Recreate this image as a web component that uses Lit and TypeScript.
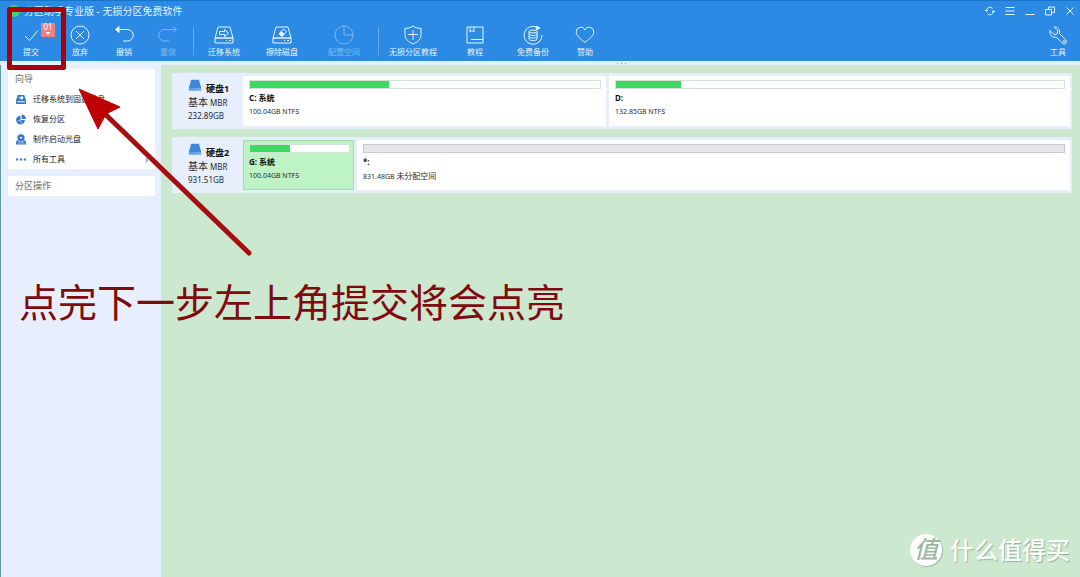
import { LitElement, html, css, svg, nothing } from "lit";
import { customElement, property } from "lit/decorators.js";
import { classMap } from "lit/directives/class-map.js";
import { styleMap } from "lit/directives/style-map.js";

const glyphs: Record<string, unknown> = {
  check: svg`<path d="M4 11l4.500 4.500L17 5.500"/>`,
  discard: svg`<circle cx="10" cy="10" r="9"/><path d="M6 6l8 8M14 6l-8 8"/>`,
  undo: svg`<path d="M1.500 4.500h12a5 5 0 0 1 0 11.500H9"/><path d="M5 1.500l-3.500 3L5 7.500z" fill="currentColor"/>`,
  redo: svg`<path d="M18.500 4.500h-12a5 5 0 0 0 0 11.500H11"/><path d="M15 1.500l3.500 3L15 7.500"/>`,
  migrate: svg`<path d="M4 2h12l3 11H1zM1 13h18v5H1zM12 15.500h1m2 0h2"/><path d="M5.500 6.500h5V4.500l4 3.500-4 3.500v-2h-5z"/>`,
  wipe: svg`<path d="M4 2h12l3 11H1zM1 13h18v5H1zM12 15.500h1m2 0h2"/><path d="M11.500 4l3 2.500-4.500 5-3-2.500z"/><path d="M9 6.500l3 2.500-2 2.500-3-2.500z" fill="currentColor"/>`,
  space: svg`<circle cx="10" cy="10" r="9"/><path d="M10 1v9h9"/>`,
  shield: svg`<path d="M10 1c2.500 1.800 5 2.300 8 2.500v6c0 5-3.500 7.500-8 9.500-4.500-2-8-4.500-8-9.500v-6c3-.2 5.500-.7 8-2.500zM10 5v10M5 9.500h10"/>`,
  book: svg`<path d="M2 2h16v16H2zM5 2v5l2-1.500L9 7V2M6 14.500h12"/>`,
  backup: svg`<path d="M14.500 2.500A9 9 0 1 0 19 10"/><path d="M13 1l4 2-3.500 2z" fill="currentColor"/><ellipse cx="10" cy="6.500" rx="4" ry="1.500"/><path d="M6 6.500V14c0 2 8 2 8 0V6.500M6 9c0 2 8 2 8 0M6 11.500c0 2 8 2 8 0"/>`,
  heart: svg`<path d="M10 17.500C5 13.500 1.200 10.500 1.200 7A4.600 4.600 0 0 1 10 5a4.600 4.600 0 0 1 8.800 2c0 3.500-3.800 6.500-8.800 10.500z"/>`,
  wrench: svg`<path d="M6 2l4 4-1 3-3 .5-4-4c-.8 4 2 7.500 6 6.500l6.500 6.200a2.300 2.300 0 0 0 3.300-3.300L11.500 8.500C12.500 4.500 9.500 1.500 6 2z"/><circle cx="16" cy="16.500" r=".8"/>`,
  refresh: svg`<path d="M3 10a7 7 0 0 1 12-5.500M17 10a7 7 0 0 1-12 5.500M0 8l3 3 3-3M20 12l-3-3-3 3" stroke-width="2"/>`,
  menu: svg`<path d="M1 3h18M1 10h18M1 17h18" stroke-width="2"/>`,
  minimize: svg`<path d="M1 17h18" stroke-width="2"/>`,
  restore: svg`<path d="M1 7h12v11H1zM7 7V2h12v11h-6" stroke-width="2"/>`,
  close: svg`<path d="M3 3l14 14M17 3L3 17" stroke-width="2"/>`,
  sideDisk: svg`<path d="M4 2h12l3 10v6H1v-6z" fill="currentColor" stroke="none"/><path d="M6 7h7M10.500 4L13.500 7l-3 3M3 14h14" stroke="#fff" stroke-width="2"/>`,
  sidePie: svg`<path d="M9 3a8 8 0 1 0 8 8H9z" fill="currentColor" stroke="none"/><path d="M11 1v8h8a8 8 0 0 0-8-8z" fill="currentColor" stroke="none"/><path d="M9 11l-7 3M9 11l2 8" stroke="#fff"/>`,
  sideDisc: svg`<circle cx="10" cy="7" r="6.500" fill="currentColor" stroke="none"/><circle cx="10" cy="7" r="2" fill="#fff" stroke="none"/><path d="M3 11l-2 4v4h18v-4l-2-4-4 3H7z" fill="currentColor" stroke="none"/><path d="M4 16.500h12" stroke="#fff"/>`,
  sideDots: svg`<path d="M1 8h4v4H1zM8 8h4v4H8zM15 8h4v4h-4z" fill="currentColor" stroke="none"/>`,
  disk: svg`<path d="M4 1h12l3.500 13H.5z" fill="#4185dc" stroke="none"/><path d="M.5 14h19v4H.5z" fill="#5b9be9" stroke="none"/><path d="M12 16h1m2 0h1m1 0h1" stroke="#e8f2ff"/>`,
};

@customElement("ui-icon")
class UiIcon extends LitElement {
  @property() name = "";
  static styles = css`
    :host { display: block; width: 20px; height: 20px; }
    .glyph { display: block; width: 100%; height: 100%; fill: none; stroke: currentColor; }
  `;
  render() {
    return html`<svg class="glyph" viewBox="0 0 20 20" aria-hidden="true">${glyphs[this.name]}</svg>`;
  }
}

interface Partition {
  name: string;
  size: string;
  note?: string;
  share: number;
  used: number;
  selected?: boolean;
  free?: boolean;
}

@customElement("disk-row")
class DiskRow extends LitElement {
  @property() name = "";
  @property() capacity = "";
  @property({ attribute: false }) partitions: Partition[] = [];
  static styles = css`
    :host { display: block; }
    .row { display: flex; gap: 3px; min-height: 50px; padding: 3px 2px 3px 0; background: #e6effb; }
    .disk { width: 52px; flex: none; padding: 3px 0 0 16px; color: #252a33; font-size: 8px; line-height: 13px; }
    .head { display: flex; align-items: flex-end; gap: 4px; height: 15px; margin-bottom: 2px; }
    .head ui-icon { width: 14px; height: 13px; align-self: flex-start; }
    .title { font-size: 9px; font-weight: 700; line-height: 11px; color: #111; }
    .kind { font-size: 10px; }
    .parts { flex: 1; min-width: 0; display: grid; gap: 3px; }
    .part { box-sizing: border-box; min-width: 0; padding: 3px 4px 0 6px; background: #fff; border: 1px solid #fff; border-left-width: 0; color: #2b2b2b; }
    .selected { background: #bef3c5; border: 1px solid #a5ddb0; padding-left: 5px; padding-right: 3px; }
    .bar { box-sizing: border-box; height: 9px; background: #fff; border: 1px solid #d5e0d8; }
    .free .bar { background: #e6e6ea; border-color: #c9c9cf; }
    .fill { height: 100%; background: #3fd862; }
    .name { padding-top: 3px; font-size: 8px; font-weight: 700; line-height: 12px; color: #111; }
    .size { padding-top: 2px; font-size: 7px; line-height: 12px; white-space: nowrap; }
    .note { font-size: 8px; }
  `;
  render() {
    const columns = this.partitions.map((p) => `minmax(0, ${p.share}fr)`).join(" ");
    return html`<div class="row">
      <div class="disk">
        <div class="head"><ui-icon name="disk"></ui-icon><span class="title">${this.name}</span></div>
        <div><span class="kind">基本</span> MBR</div>
        <div>${this.capacity}</div>
      </div>
      <div class="parts" style=${styleMap({ gridTemplateColumns: columns })}>
        ${this.partitions.map((p) => html`
          <div class=${classMap({ part: true, selected: !!p.selected, free: !!p.free })}>
            <div class="bar">${p.used ? html`<div class="fill" style=${styleMap({ width: `${p.used}%` })}></div>` : nothing}</div>
            <div class="name">${p.name}</div>
            <div class="size">${p.size}${p.note ? html` <span class="note">${p.note}</span>` : nothing}</div>
          </div>`)}
      </div>
    </div>`;
  }
}

const tools = [
  [
    { icon: "check", label: "提交", size: "wide", count: "01" },
    { icon: "discard", label: "放弃", size: "small" },
    { icon: "undo", label: "撤销", size: "small" },
    { icon: "redo", label: "重做", size: "small", off: true },
  ],
  [
    { icon: "migrate", label: "迁移系统", size: "wide" },
    { icon: "wipe", label: "擦除磁盘", size: "large" },
    { icon: "space", label: "配置空间", size: "large", off: true },
  ],
  [
    { icon: "shield", label: "无损分区教程", size: "large" },
    { icon: "book", label: "教程", size: "large" },
    { icon: "backup", label: "免费备份", size: "wide" },
    { icon: "heart", label: "赞助", size: "medium" },
  ],
] as { icon: string; label: string; size: string; count?: string; off?: boolean }[][];

const windowButtons = [
  ["refresh", "刷新"], ["menu", "菜单"], ["minimize", "最小化"], ["restore", "还原"], ["close", "关闭"],
];

const wizards = [
  ["sideDisk", "迁移系统到固态磁盘"], ["sidePie", "恢复分区"], ["sideDisc", "制作启动光盘"], ["sideDots", "所有工具"],
];

const disks: { name: string; capacity: string; partitions: Partition[] }[] = [
  { name: "硬盘1", capacity: "232.89GB", partitions: [
    { name: "C: 系统", size: "100.04GB NTFS", share: 363, used: 39.7 },
    { name: "D:", size: "132.85GB NTFS", share: 461, used: 14.4 },
  ] },
  { name: "硬盘2", capacity: "931.51GB", partitions: [
    { name: "G: 系统", size: "100.04GB NTFS", share: 111, used: 40, selected: true },
    { name: "*:", size: "831.48GB", note: "未分配空间", share: 713, used: 0, free: true },
  ] },
];

@customElement("app-root")
class AppRoot extends LitElement {
  static styles = css`
    :host { display: flex; flex-direction: column; position: relative; min-height: 100vh; overflow: hidden; background: #cce8cf; font-family: "Noto Sans", "Noto Sans CJK SC", sans-serif; }
    button { margin: 0; padding: 0; border: 0; background: none; color: inherit; font: inherit; }
    .header { background: #2c8ae4; color: #e4f4ff; border-top: 1px solid #1774c8; }
    .titlebar { display: flex; align-items: center; height: 20px; }
    .logo { width: 12px; height: 12px; margin: 0 4px 0 8px; border-radius: 50%; background: #48cf68; }
    .title { flex: 1; margin: 0; font-size: 10px; font-weight: 400; line-height: 16px; }
    .win { display: grid; place-items: center; width: 20px; height: 20px; }
    .win ui-icon { width: 10px; height: 10px; }
    .toolbar { display: flex; align-items: center; height: 40px; padding-left: 4px; }
    .tool { position: relative; display: flex; flex-direction: column; align-items: center; gap: 2px; width: 44px; font-size: 8px; line-height: 10px; white-space: nowrap; }
    .medium { width: 50px; }
    .wide { width: 54px; }
    .large { width: 62px; }
    .off { color: #79b9ef; }
    .sep { width: 1px; height: 28px; margin: 0 3px; background: #64a9ea; }
    .push { margin-left: auto; }
    .badge { position: absolute; left: 37px; top: -2px; width: 14px; height: 14px; background: #ee7e82; color: #fff; font-size: 8px; line-height: 8px; text-align: center; }
    .tip { display: block; width: 5px; height: 3px; margin: 1px auto 0; background: #fff; clip-path: polygon(0 0, 100% 0, 50% 100%); }
    .strip { height: 4px; background: #e6f0f8; display: flex; justify-content: center; }
    .grip { width: 9px; height: 1px; margin: 2px 0 0 162px; background: repeating-linear-gradient(90deg, #829caf 0 1px, transparent 1px 4px); }
    .body { flex: 1; display: flex; }
    .side { flex: none; box-sizing: border-box; width: 161px; padding: 4px 6px 0 7px; background: #e7eefd; border-left: 1px solid #5c9cab; display: flex; flex-direction: column; gap: 7px; }
    .panel { background: #fff; padding: 0 7px; }
    .caption { margin: 0; font-size: 9px; font-weight: 400; line-height: 20px; color: #6b6b6b; }
    .entry { display: flex; align-items: center; gap: 6px; width: 100%; height: 20px; font-size: 8px; line-height: 20px; color: #1c1c1c; text-align: left; }
    .entry ui-icon { width: 12px; height: 11px; color: #3278cc; }
    .more { margin-left: auto; color: #3278cc; font-size: 10px; }
    .map { flex: 1; min-width: 0; padding: 7px 8px 0 11px; display: flex; flex-direction: column; gap: 8px; border-top: 1px solid #d3e2e0; box-sizing: border-box; }
    .frame { position: absolute; left: 7px; top: 7px; width: 59px; height: 63px; box-sizing: border-box; border: 5px solid #ab0009; border-radius: 2px; pointer-events: none; }
    .arrow { position: absolute; left: 0; top: 0; width: 260px; height: 264px; pointer-events: none; }
    .caption-note { position: absolute; left: 19px; top: 278px; margin: 0; font-size: 39px; line-height: 48px; color: #7f0b0e; white-space: nowrap; pointer-events: none; }
    .mark { position: absolute; right: 10px; bottom: 10px; display: flex; align-items: center; gap: 8px; color: #fff; font-size: 24px; font-weight: 500; line-height: 34px; text-shadow: 1px 1px 1px #8fb59a; }
    .seal { width: 32px; height: 32px; border-radius: 50%; background: #fff; color: #9cb8a2; text-shadow: none; line-height: 30px; font-style: italic; text-align: center; box-shadow: 1px 1px 1px #9cc0a6; }
  `;
  render() {
    return html`
      <header class="header">
        <div class="titlebar">
          <span class="logo"></span>
          <h1 class="title">分区助手专业版 - 无损分区免费软件</h1>
          ${windowButtons.map(([icon, label]) => html`<button class="win" aria-label=${label}><ui-icon name=${icon}></ui-icon></button>`)}
        </div>
        <nav class="toolbar">
          ${tools.map((group, i) => html`
            ${i ? html`<span class="sep"></span>` : nothing}
            ${group.map((t) => html`
              <button class=${classMap({ tool: true, [t.size]: true, off: !!t.off })} ?disabled=${!!t.off}>
                <ui-icon name=${t.icon}></ui-icon><span>${t.label}</span>
                ${t.count ? html`<span class="badge">${t.count}<span class="tip"></span></span>` : nothing}
              </button>`)}`)}
          <button class="tool push"><ui-icon name="wrench"></ui-icon><span>工具</span></button>
        </nav>
      </header>
      <div class="strip"><span class="grip"></span></div>
      <div class="body">
        <aside class="side">
          <section class="panel">
            <h2 class="caption">向导</h2>
            ${wizards.map(([icon, label]) => html`
              <button class="entry"><ui-icon name=${icon}></ui-icon><span>${label}</span>
                ${icon === "sideDots" ? html`<span class="more">›</span>` : nothing}</button>`)}
          </section>
          <section class="panel"><h2 class="caption">分区操作</h2></section>
        </aside>
        <main class="map">
          ${disks.map((d) => html`<disk-row .name=${d.name} .capacity=${d.capacity} .partitions=${d.partitions}></disk-row>`)}
        </main>
      </div>
      <div class="frame"></div>
      <svg class="arrow" viewBox="0 0 260 264" aria-hidden="true">
        <path d="M104 113L249 253" stroke="#a50f10" stroke-width="5" stroke-linecap="round"/>
        <path d="M79 89L120 107L106 114L98 129Z" fill="#bd0003" stroke="#bd0003" stroke-width="1" stroke-linejoin="round"/>
      </svg>
      <p class="caption-note">点完下一步左上角提交将会点亮</p>
      <div class="mark"><span class="seal">值</span><span>什么值得买</span></div>
    `;
  }
}
